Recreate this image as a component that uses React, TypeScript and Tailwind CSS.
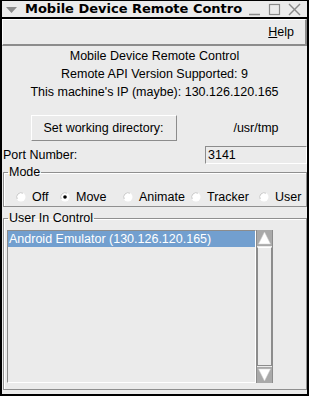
import React from 'react'

const modes = [
  { label: 'Off', width: 'w-[44px]' },
  { label: 'Move', width: 'w-[63px]' },
  { label: 'Animate', width: 'w-[68px]' },
  { label: 'Tracker', width: 'w-[68px]' },
  { label: 'User', width: 'w-[46px]' },
]

function Radio({ checked }: { checked?: boolean }) {
  return (
    <svg width="10" height="10" viewBox="0 0 10 10" className="shrink-0">
      <circle cx="5" cy="5" r="4.5" fill="#ffffff" />
      <path d="M1.2 7 A4.3 4.3 0 0 1 7 1.2" fill="none" stroke="#c8c8c8" strokeWidth="1" />
      {checked && <circle cx="5" cy="5" r="1.8" fill="#000000" />}
    </svg>
  )
}

function Arrow({ up }: { up?: boolean }) {
  return (
    <svg width="15" height="16" viewBox="0 0 15 16" className="block">
      <rect x="0" y="0" width="15" height="16" fill="#a9a9a9" />
      {up ? (
        <polygon points="7.5,2 1.5,14 13.5,14" fill="#ffffff" stroke="#d0d0d0" strokeWidth="0.5" />
      ) : (
        <polygon points="1.5,2 13.5,2 7.5,14" fill="#ffffff" stroke="#d0d0d0" strokeWidth="0.5" />
      )}
    </svg>
  )
}

export default function App() {
  return (
    <div
      className="w-[309px] h-[396px] bg-[#ebebeb] border-x-2 border-b-2 border-t border-black flex flex-col text-black overflow-hidden"
      style={{ fontFamily: '"Liberation Sans", Arial, sans-serif' }}
    >
      {/* Title bar */}
      <div className="h-[18px] flex items-center border-b-2 border-black shrink-0">
        <svg width="11" height="6" viewBox="0 0 11 6" className="ml-[4px] mt-[2px] shrink-0">
          <polygon points="0,0 11,0 5.5,6" fill="#8c8c8c" />
        </svg>
        <div
          className="ml-[8px] w-[219px] whitespace-nowrap font-bold text-[13px] leading-[18px]"
          style={{ fontFamily: '"DejaVu Sans", sans-serif' }}
        >
          Mobile Device Remote Contro
        </div>
        <svg width="60" height="14" viewBox="0 0 60 14" className="ml-[4px] shrink-0">
          <line x1="2" y1="12.5" x2="13" y2="12.5" stroke="#8a8a8a" strokeWidth="1.5" />
          <rect x="22.5" y="2.5" width="10" height="10" fill="none" stroke="#8a8a8a" strokeWidth="1.2" />
          <line x1="42" y1="2" x2="53" y2="13" stroke="#8a8a8a" strokeWidth="1.4" />
          <line x1="53" y1="2" x2="42" y2="13" stroke="#8a8a8a" strokeWidth="1.4" />
        </svg>
      </div>

      {/* Menu bar */}
      <div className="h-[27px] shrink-0 flex items-center justify-end border-t border-l border-white border-b-2 border-r-2 border-b-[#8c8c8c] border-r-[#8c8c8c] text-[12.5px]">
        <span className="mr-[11px]">
          <span className="underline">H</span>elp
        </span>
      </div>

      {/* Body */}
      <div className="flex flex-col text-[12.5px] leading-[18px] pt-[1px]">
        <div className="text-center">Mobile Device Remote Control</div>
        <div className="text-center">Remote API Version Supported: 9</div>
        <div className="text-center">This machine&apos;s IP (maybe): 130.126.120.165</div>

        <div className="grid grid-cols-[203px_1fr] mt-[14px]">
          <div className="flex justify-center">
            <button className="w-[146px] h-[26px] border border-t-white border-l-white border-b-[#8c8c8c] border-r-[#8c8c8c] bg-[#ebebeb]">
              Set working directory:
            </button>
          </div>
          <div className="flex items-center justify-center">/usr/tmp</div>

          <div className="flex items-center pl-[1px] mt-[5px]">Port Number:</div>
          <div className="mt-[5px] h-[18px] border border-t-[#8c8c8c] border-l-[#8c8c8c] border-b-white border-r-white flex items-center pl-[2px] leading-[16px]">
            3141
          </div>
        </div>

        {/* Mode */}
        <fieldset className="ml-[1px] mt-[1px] h-[42px] border border-[#8f8f8f] shadow-[inset_1px_1px_0_#ffffff]">
          <legend className="ml-[4px] px-[1px] leading-[14px]">Mode</legend>
          <div className="flex items-center pl-[12px] mt-[11px]">
            {modes.map((m) => (
              <div key={m.label} className={`flex items-center gap-[6px] ${m.width}`}>
                <Radio checked={m.label === 'Move'} />
                <span className="leading-[14px]">{m.label}</span>
              </div>
            ))}
          </div>
        </fieldset>

        {/* User In Control */}
        <fieldset className="ml-[1px] mt-[4px] h-[179px] border border-[#8f8f8f] shadow-[inset_1px_1px_0_#ffffff]">
          <legend className="ml-[4px] px-[1px] leading-[14px]">User In Control</legend>
          <div className="flex ml-[3px] mt-[5px]">
            <div className="w-[249px] h-[153px] border border-t-[#8c8c8c] border-l-[#8c8c8c] border-b-white border-r-white">
              <div className="h-[16px] bg-[#729fcf] text-white pl-[1px] leading-[16px] whitespace-nowrap">
                Android Emulator (130.126.120.165)
              </div>
            </div>
            <div className="w-[17px] h-[153px] flex flex-col border-x border-[#8c8c8c]">
              <Arrow up />
              <div className="flex-1 border border-[#8c8c8c] border-t-white mt-[1px] mb-[1px]" />
              <Arrow />
            </div>
          </div>
        </fieldset>
      </div>
    </div>
  )
}
